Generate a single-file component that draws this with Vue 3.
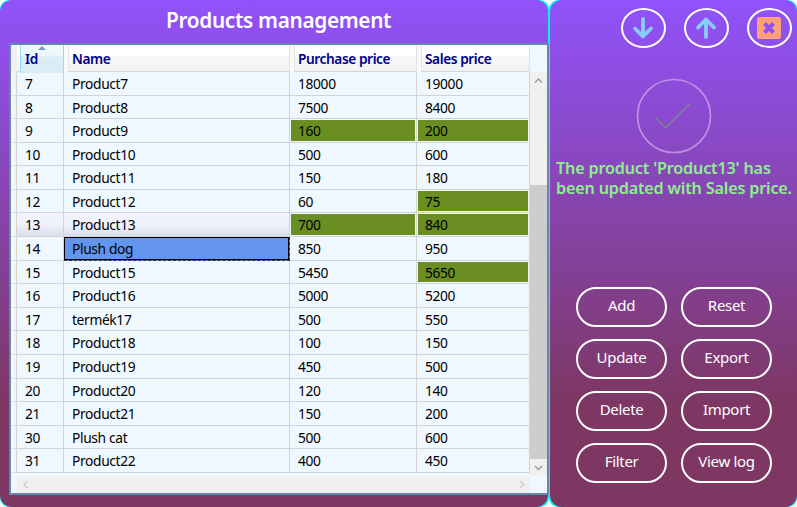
<script setup>
const rows = [
  { id: 7, name: 'Product7', buy: 18000, sell: 19000 },
  { id: 8, name: 'Product8', buy: 7500, sell: 8400 },
  { id: 9, name: 'Product9', buy: 160, sell: 200, buyHit: true, sellHit: true },
  { id: 10, name: 'Product10', buy: 500, sell: 600 },
  { id: 11, name: 'Product11', buy: 150, sell: 180 },
  { id: 12, name: 'Product12', buy: 60, sell: 75, sellHit: true },
  { id: 13, name: 'Product13', buy: 700, sell: 840, buyHit: true, sellHit: true, hover: true },
  { id: 14, name: 'Plush dog', buy: 850, sell: 950, selected: true },
  { id: 15, name: 'Product15', buy: 5450, sell: 5650, sellHit: true },
  { id: 16, name: 'Product16', buy: 5000, sell: 5200 },
  { id: 17, name: 'termék17', buy: 500, sell: 550 },
  { id: 18, name: 'Product18', buy: 100, sell: 150 },
  { id: 19, name: 'Product19', buy: 450, sell: 500 },
  { id: 20, name: 'Product20', buy: 120, sell: 140 },
  { id: 21, name: 'Product21', buy: 150, sell: 200 },
  { id: 30, name: 'Plush cat', buy: 500, sell: 600 },
  { id: 31, name: 'Product22', buy: 400, sell: 450 },
]
const actions = ['Add', 'Reset', 'Update', 'Export', 'Delete', 'Import', 'Filter', 'View log']
</script>

<template>
  <div class="window">
    <div class="edge edge-main">
      <section class="panel main">
        <h1>Products management</h1>
        <div class="grid">
          <div class="head">
            <span class="corner"></span>
            <span class="th sorted">Id<i class="sort"></i></span>
            <span class="th">Name</span>
            <span class="th">Purchase price</span>
            <span class="th">Sales price</span>
          </div>
          <div class="body">
            <div class="rows">
              <div v-for="r in rows" :key="r.id" class="row" :class="{ hover: r.hover }">
                <span class="rh"></span>
                <span class="td">{{ r.id }}</span>
                <span class="td" :class="{ selected: r.selected }">{{ r.name }}</span>
                <span class="td" :class="{ hit: r.buyHit }">{{ r.buy }}</span>
                <span class="td" :class="{ hit: r.sellHit }">{{ r.sell }}</span>
              </div>
            </div>
            <div class="vbar">
              <svg class="chev" viewBox="0 0 17 17"><path d="M5 10.5 8.5 7 12 10.5" /></svg>
              <div class="thumb"></div>
              <svg class="chev" viewBox="0 0 17 17"><path d="M5 7 8.5 10.5 12 7" /></svg>
            </div>
          </div>
          <div class="hbar">
            <svg class="chev pale" viewBox="0 0 17 17"><path d="M10.5 5 7 8.5 10.5 12" /></svg>
            <svg class="chev pale" viewBox="0 0 17 17"><path d="M7 5 10.5 8.5 7 12" /></svg>
          </div>
        </div>
      </section>
    </div>

    <div class="edge edge-side">
      <section class="panel side">
        <div class="tools">
          <button class="round">
            <svg viewBox="0 0 24 24"><path class="arrow" d="M12 3V20.500M4 12.500 12 20.500 20 12.500" /></svg>
          </button>
          <button class="round">
            <svg viewBox="0 0 24 24"><path class="arrow" d="M12 21V3.500M4 11.500 12 3.500 20 11.500" /></svg>
          </button>
          <button class="round">
            <svg viewBox="0 0 24 24">
              <rect x="0" y="1" width="24" height="22" rx="2" fill="#ffa07a" />
              <path class="cross" d="M7.500 7.500 16.500 16.500M16.500 7.500 7.500 16.500" />
            </svg>
          </button>
        </div>
        <svg class="check" viewBox="0 0 76 76">
          <circle cx="38" cy="38" r="36.500" />
          <path class="shade" d="M20 40.500 29.500 50.500 54 26" />
          <path class="tick" d="M19.500 39.500 29.500 49.500 53.500 25.500" />
        </svg>
        <p class="message"><span>The product 'Product13' has</span><span>been updated with Sales price.</span></p>
        <div class="actions">
          <button v-for="a in actions" :key="a" class="pill">{{ a }}</button>
        </div>
      </section>
    </div>
  </div>
</template>

<style>
body {
  background: #fff;
}
</style>

<style scoped>
* {
  box-sizing: border-box;
}
.window {
  display: flex;
  width: 797px;
  height: 507px;
  overflow: hidden;
  font-family: 'Noto Sans', 'Open Sans', sans-serif;
}
.edge {
  height: 507px;
  background: #00f6ff;
  border-radius: 9px;
}
.edge-main {
  width: 549px;
  padding-right: 1px;
}
.edge-side {
  width: 248px;
  padding-left: 1px;
}
.panel {
  height: 507px;
  background: linear-gradient(#9152fb 0, #7d3762 80%);
  border-radius: 12px;
}
.main {
  padding-left: 9px;
}
h1 {
  margin: 0;
  height: 43px;
  padding: 5px 0 0 157px;
  font-size: 20.800px;
  line-height: 30px;
  font-weight: 600;
  letter-spacing: -0.34px;
  color: #fff;
  white-space: nowrap;
}
.grid {
  width: 540px;
  height: 452px;
  border: 2px solid #6289ad;
  background: #f0f8ff;
  position: relative;
}
.head,
.row {
  display: grid;
  grid-template-columns: 6px 47px 226px 127px 113px;
  width: 519px;
}
.head {
  height: 27px;
  border-bottom: 1px solid #d3d3d3;
  background: linear-gradient(#fff 0, #fff 40%, #f7f8fa 42%, #f1f2f4 100%);
}
.corner {
  background: #f0f0f0;
}
.th {
  position: relative;
  padding-left: 8px;
  font-size: 13.700px;
  font-weight: 600;
  line-height: 28px;
  color: #00008b;
  letter-spacing: -0.42px;
  white-space: nowrap;
  border-right: 1px solid #dfe1e4;
  box-shadow: 4px 0 0 0 #f9f9fa, 5px 0 0 0 #e4e5e7;
}
.th:last-child {
  box-shadow: none;
}
.sorted {
  margin-left: 3px;
  padding-left: 4px;
  border-left: 1px solid #96d9f9;
  border-right-color: #96d9f9;
  background: linear-gradient(#f2f9fc 0, #eaf6fb 40%, #dcedf6 42%, #d8ebf4 100%);
}
.sort {
  position: absolute;
  left: 17px;
  top: 1px;
  border: 4px solid transparent;
  border-top: 0;
  border-bottom-color: #6f9dbb;
}
.body {
  display: flex;
  height: 404px;
}
.rows {
  width: 519px;
}
.row {
  height: 23.590px;
}
.rh {
  border-right: 1px solid #d3d3d3;
  border-bottom: 1px solid #dde1e6;
  background: linear-gradient(90deg, #f9fbfd, #f0f1f4);
}
.td {
  padding-left: 8px;
  font-size: 13.800px;
  line-height: 24px;
  letter-spacing: -0.36px;
  color: #000;
  white-space: nowrap;
  overflow: hidden;
  border-right: 1px solid #d3d3d3;
  border-bottom: 1px solid #d3d3d3;
}
.hover .td {
  background: linear-gradient(#f1f3ff 0, #f0f1fb 50%, #d8dfea 100%);
}
.row .td.hit {
  background: #6b8e23;
  box-shadow: inset 0 0 0 1px #f0f8ff;
}
.td.selected {
  background: #6495ed;
  box-shadow: inset 0 0 0 1px #000;
  border-right: 1px dashed #333;
  border-bottom: 1px dashed #333;
}
.vbar {
  width: 17px;
  background: #f0f0f0;
  display: flex;
  flex-direction: column;
}
.thumb {
  margin-top: 96px;
  height: 274px;
  background: #cdcdcd;
}
.chev {
  display: block;
  width: 17px;
  height: 17px;
  fill: none;
  stroke: #9c9c9c;
  stroke-width: 1.500;
}
.pale {
  stroke: #d0d0d0;
}
.hbar {
  display: flex;
  justify-content: space-between;
  width: 513px;
  height: 17px;
  margin-left: 6px;
  background: #f0f0f0;
}
.tools {
  display: flex;
  gap: 18px;
  padding: 8px 0 0 70.500px;
}
button {
  font: inherit;
  color: #fff;
  background: transparent;
  border: 2px solid #fff;
  padding: 0;
}
.round {
  flex: none;
  width: 45px;
  height: 40px;
  border-radius: 50%;
  display: flex;
  align-items: center;
  justify-content: center;
}
.round svg {
  width: 24px;
  height: 24px;
}
.arrow {
  fill: none;
  stroke: #87cefa;
  stroke-width: 3.800;
  stroke-linecap: round;
  stroke-linejoin: round;
}
.cross {
  stroke: #9150f0;
  stroke-width: 4;
}
.check {
  display: block;
  width: 76px;
  height: 76px;
  margin: 30px 0 0 86px;
  fill: none;
}
.check circle {
  stroke: #bd93e2;
  stroke-width: 1.700;
}
.shade {
  stroke: #a68bcb;
  stroke-width: 1;
}
.tick {
  stroke: #737b91;
  stroke-width: 1.500;
}
.message {
  margin: 4px 0 0 6px;
  height: 40px;
  font-size: 16.200px;
  line-height: 20px;
  font-weight: 600;
  color: #90ee90;
  white-space: nowrap;
  letter-spacing: -0.19px;
}
.message span {
  display: block;
}
.actions {
  display: grid;
  grid-template-columns: 90.500px 90.500px;
  grid-auto-rows: 40px;
  gap: 12px 14.500px;
  padding: 89px 0 0 26.300px;
}
.pill {
  border-radius: 20px;
  font-size: 15px;
  line-height: 33px;
  padding-bottom: 3px;
  letter-spacing: -0.3px;
}
</style>
